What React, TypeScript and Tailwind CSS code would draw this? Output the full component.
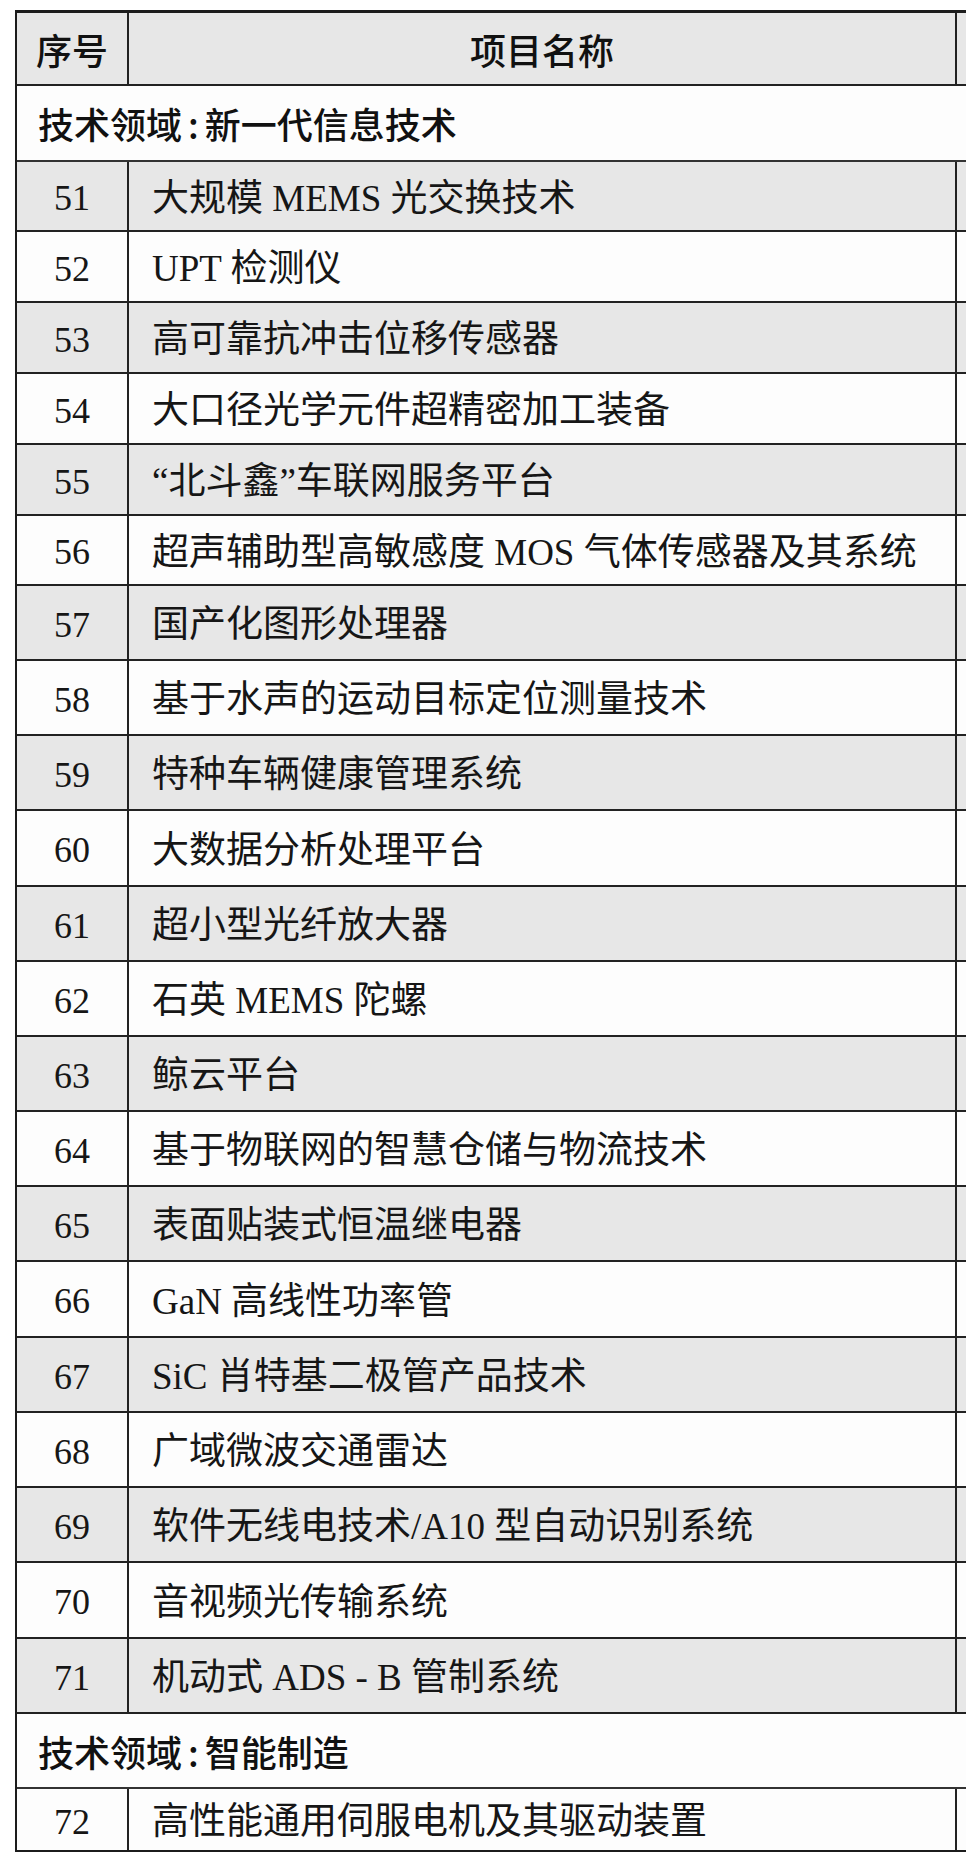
const rows: { no: number; name: string; h: string }[] = [
  { no: 51, name: "大规模 MEMS 光交换技术", h: "h-[70px]" },
  { no: 52, name: "UPT 检测仪", h: "h-[71px]" },
  { no: 53, name: "高可靠抗冲击位移传感器", h: "h-[71px]" },
  { no: 54, name: "大口径光学元件超精密加工装备", h: "h-[71px]" },
  { no: 55, name: "“北斗鑫”车联网服务平台", h: "h-[71px]" },
  { no: 56, name: "超声辅助型高敏感度 MOS 气体传感器及其系统", h: "h-[70px]" },
  { no: 57, name: "国产化图形处理器", h: "h-[75px]" },
  { no: 58, name: "基于水声的运动目标定位测量技术", h: "h-[75px]" },
  { no: 59, name: "特种车辆健康管理系统", h: "h-[75px]" },
  { no: 60, name: "大数据分析处理平台", h: "h-[76px]" },
  { no: 61, name: "超小型光纤放大器", h: "h-[75px]" },
  { no: 62, name: "石英 MEMS 陀螺", h: "h-[75px]" },
  { no: 63, name: "鲸云平台", h: "h-[75px]" },
  { no: 64, name: "基于物联网的智慧仓储与物流技术", h: "h-[75px]" },
  { no: 65, name: "表面贴装式恒温继电器", h: "h-[75px]" },
  { no: 66, name: "GaN 高线性功率管", h: "h-[76px]" },
  { no: 67, name: "SiC 肖特基二极管产品技术", h: "h-[75px]" },
  { no: 68, name: "广域微波交通雷达", h: "h-[75px]" },
  { no: 69, name: "软件无线电技术/A10 型自动识别系统", h: "h-[75px]" },
  { no: 70, name: "音视频光传输系统", h: "h-[76px]" },
  { no: 71, name: "机动式 ADS - B 管制系统", h: "h-[75px]" },
];

const serif = "[font-family:'Liberation_Serif','Noto_Sans_CJK_SC',serif]";
const sans = "[font-family:'Noto_Sans_CJK_SC','Noto_Sans',sans-serif]";

function Row({ no, name, h, last }: { no: number; name: string; h: string; last?: boolean }) {
  const bg = no % 2 === 1 ? "bg-[#e7e7e7]" : "bg-[#fdfdfd]";
  return (
    <div className={`flex ${h} ${bg} ${last ? "" : "border-b-2 border-[#222]"}`}>
      <div className={`flex w-[110px] items-center justify-center pt-[4px] text-[36px] leading-none text-[#161616] ${serif}`}>{no}</div>
      <div className={`flex w-[828px] items-center whitespace-pre border-l-2 border-[#222] pl-[23px] pt-[4px] text-[37px] leading-none text-[#161616] ${serif}`}>
        {name}
      </div>
      <div className="flex-1 border-l-2 border-[#222]" />
    </div>
  );
}

function Section({ title, h }: { title: string; h: string }) {
  const [a, b] = title.split(":");
  return (
    <div className={`flex ${h} items-center border-b-2 border-[#333] bg-[#fdfdfd] pl-[21px] text-[36px] font-medium leading-none text-[#111] ${sans}`}>
      <span>{a}</span>
      <span className="mx-[6px]">:</span>
      <span>{b}</span>
    </div>
  );
}

export default function App() {
  return (
    <div className="h-[1858px] w-[966px] overflow-hidden bg-white pl-[15px] pt-[10px]">
      <div className="w-[951px] border-b-2 border-l-2 border-t-[3px] border-[#1c1c1c]">
        <div className={`flex h-[73px] border-b-2 border-[#222] bg-[#e7e7e7] text-[36px] font-medium leading-none text-[#111] ${sans}`}>
          <div className="flex w-[110px] items-center justify-center">序号</div>
          <div className="flex w-[828px] items-center justify-center border-l-2 border-[#222]">项目名称</div>
          <div className="flex-1 border-l-2 border-[#222]" />
        </div>
        <Section title="技术领域:新一代信息技术" h="h-[76px]" />
        {rows.map((r) => (
          <Row key={r.no} {...r} />
        ))}
        <Section title="技术领域:智能制造" h="h-[75px]" />
        <Row no={72} name="高性能通用伺服电机及其驱动装置" h="h-[61px]" last />
      </div>
    </div>
  );
}
